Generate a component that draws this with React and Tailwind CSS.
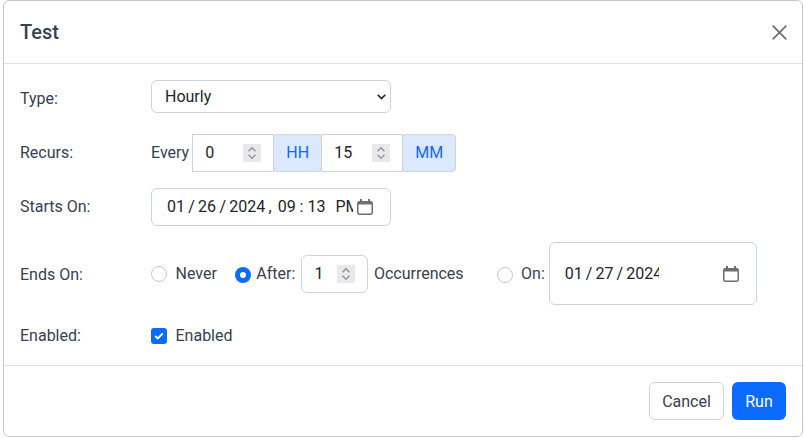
const label = 'w-[131px] shrink-0 text-[#374151]';
const field = 'border border-[#ced4da] bg-white text-[#212529]';
const unit = 'h-[38px] -ml-px flex items-center justify-center bg-[#dbe8fd] text-[#0b6bff] border border-[#ced4da] rounded-[4px]';

function Radio({ checked, className = '' }) {
    return (
        <span
            className={
                (checked
                    ? 'block w-4 h-4 shrink-0 rounded-full bg-white border-[5px] border-[#0b6bff] '
                    : 'block w-4 h-4 shrink-0 rounded-full bg-white border border-[#c4c7cc] ') + className
            }
        />
    );
}

function Spinner() {
    return (
        <svg width="18" height="18" viewBox="0 0 18 18" fill="none" className="shrink-0">
            <rect width="18" height="18" fill="#e9e9ed" />
            <path d="M5.5 7.2 L9 3.7 L12.5 7.2" stroke="#96969b" strokeWidth="1.5" />
            <path d="M5.5 10.8 L9 14.3 L12.5 10.8" stroke="#96969b" strokeWidth="1.5" />
        </svg>
    );
}

function NumberField({ value, className }) {
    return (
        <div className={`${field} h-[38px] flex items-center justify-between pl-[12px] pr-[12px] ${className}`}>
            <span>{value}</span>
            <Spinner />
        </div>
    );
}

function Calendar() {
    return (
        <svg width="16" height="16" viewBox="0 0 16 16" fill="none" className="shrink-0">
            <rect x="0.75" y="2.75" width="14.5" height="12.5" rx="2" stroke="#6f6f6f" strokeWidth="1.5" />
            <rect x="1" y="2.5" width="14" height="3" fill="#6f6f6f" />
            <rect x="3" y="0" width="2" height="3" fill="#6f6f6f" />
            <rect x="11" y="0" width="2" height="3" fill="#6f6f6f" />
        </svg>
    );
}

export default function App() {
    return (
        <div className="bg-white h-[438px] pl-[3px] font-['Roboto',sans-serif] text-[16px]">
            <div className="w-[800px] h-[437px] flex flex-col bg-white border border-[#c8c8c8] rounded-[6px]">
                {/* header */}
                <div className="h-[63px] shrink-0 flex items-center justify-between pl-[16px] pr-[15px] border-b border-[#dee2e6]">
                    <h1 className="text-[20px] font-medium text-[#374151]">Test</h1>
                    <svg width="15" height="15" viewBox="0 0 15 15" fill="none">
                        <path d="M0.7 0.7 L14.3 14.3 M14.3 0.7 L0.7 14.3" stroke="#6b7280" strokeWidth="1.8" />
                    </svg>
                </div>

                {/* body */}
                <div className="flex-1 flex flex-col gap-4 px-[16px] pt-4 pb-[14px]">
                    <div className="h-[38px] flex items-center">
                        <span className={label}>Type:</span>
                        <div className={`${field} w-[240px] h-[33px] self-start rounded-[6px] flex items-center justify-between pl-[13px] pr-[4px]`}>
                            <span>Hourly</span>
                            <svg width="9" height="6" viewBox="0 0 9 6" fill="none">
                                <path d="M0.7 0.8 L4.5 4.6 L8.3 0.8" stroke="#212529" strokeWidth="1.6" />
                            </svg>
                        </div>
                    </div>

                    <div className="h-[38px] flex items-center">
                        <span className={label}>Recurs:</span>
                        <span className="text-[#374151] mr-[3px]">Every</span>
                        <NumberField value="0" className="w-[82px]" />
                        <span className={`${unit} w-[49px]`}>HH</span>
                        <NumberField value="15" className="w-[82px] -ml-px" />
                        <span className={`${unit} w-[54px]`}>MM</span>
                    </div>

                    <div className="h-[38px] flex items-center">
                        <span className={label}>Starts On:</span>
                        <div className={`${field} w-[240px] h-[38px] rounded-[6px] flex items-center pl-[15px] pr-[17px]`}>
                            {/* the value runs under the picker icon and gets clipped, same as the native field */}
                            <span className="w-[186px] overflow-hidden whitespace-pre mr-[4px] [word-spacing:-0.7px]">
                                {'01 / 26 / 2024 ,'}
                                <span className="ml-[6px] [word-spacing:0px]">{'09 : 13'}</span>
                                <span className="ml-[10px]">PM</span>
                            </span>
                            <Calendar />
                        </div>
                    </div>

                    <div className="h-[63px] flex items-center">
                        <span className={`${label} pt-[2px]`}>Ends On:</span>
                        <Radio />
                        <span className="ml-[8.5px] text-[#374151]">Never</span>
                        <Radio checked className="ml-[18.5px] mt-[3px]" />
                        <span className="ml-[5px] text-[#374151]">After:</span>
                        <NumberField value="1" className="w-[67px] ml-[6px] rounded-[6px]" />
                        <span className="ml-[5.5px] text-[#374151]">Occurrences</span>
                        <Radio className="ml-[33.5px] mt-[3px]" />
                        <span className="ml-[8px] text-[#374151]">On:</span>
                        <div className={`${field} w-[208px] h-[63px] ml-[4px] rounded-[6px] flex items-center justify-between pl-[15px] pr-[17px]`}>
                            <span className="w-[94px] overflow-hidden whitespace-pre [word-spacing:-0.9px]">{'01 / 27 / 2024'}</span>
                            <Calendar />
                        </div>
                    </div>

                    <div className="h-[30px] flex items-center">
                        <span className={label}>Enabled:</span>
                        <span className="w-4 h-4 shrink-0 rounded-[3px] bg-[#0b6bff] flex items-center justify-center">
                            <svg width="10" height="8" viewBox="0 0 10 8" fill="none">
                                <path d="M1.2 4 L3.8 6.4 L8.8 1.4" stroke="white" strokeWidth="2" />
                            </svg>
                        </span>
                        <span className="ml-[8.5px] text-[#374151]">Enabled</span>
                    </div>
                </div>

                {/* footer */}
                <div className="shrink-0 flex justify-end gap-2 p-4 border-t border-[#dee2e6]">
                    <button className="w-[75px] h-[38px] pt-px rounded-[6px] bg-white border border-[#ced4da] text-[#374151]">Cancel</button>
                    <button className="w-[54px] h-[38px] pt-px rounded-[6px] bg-[#0b6bff] text-white">Run</button>
                </div>
            </div>
        </div>
    );
}
